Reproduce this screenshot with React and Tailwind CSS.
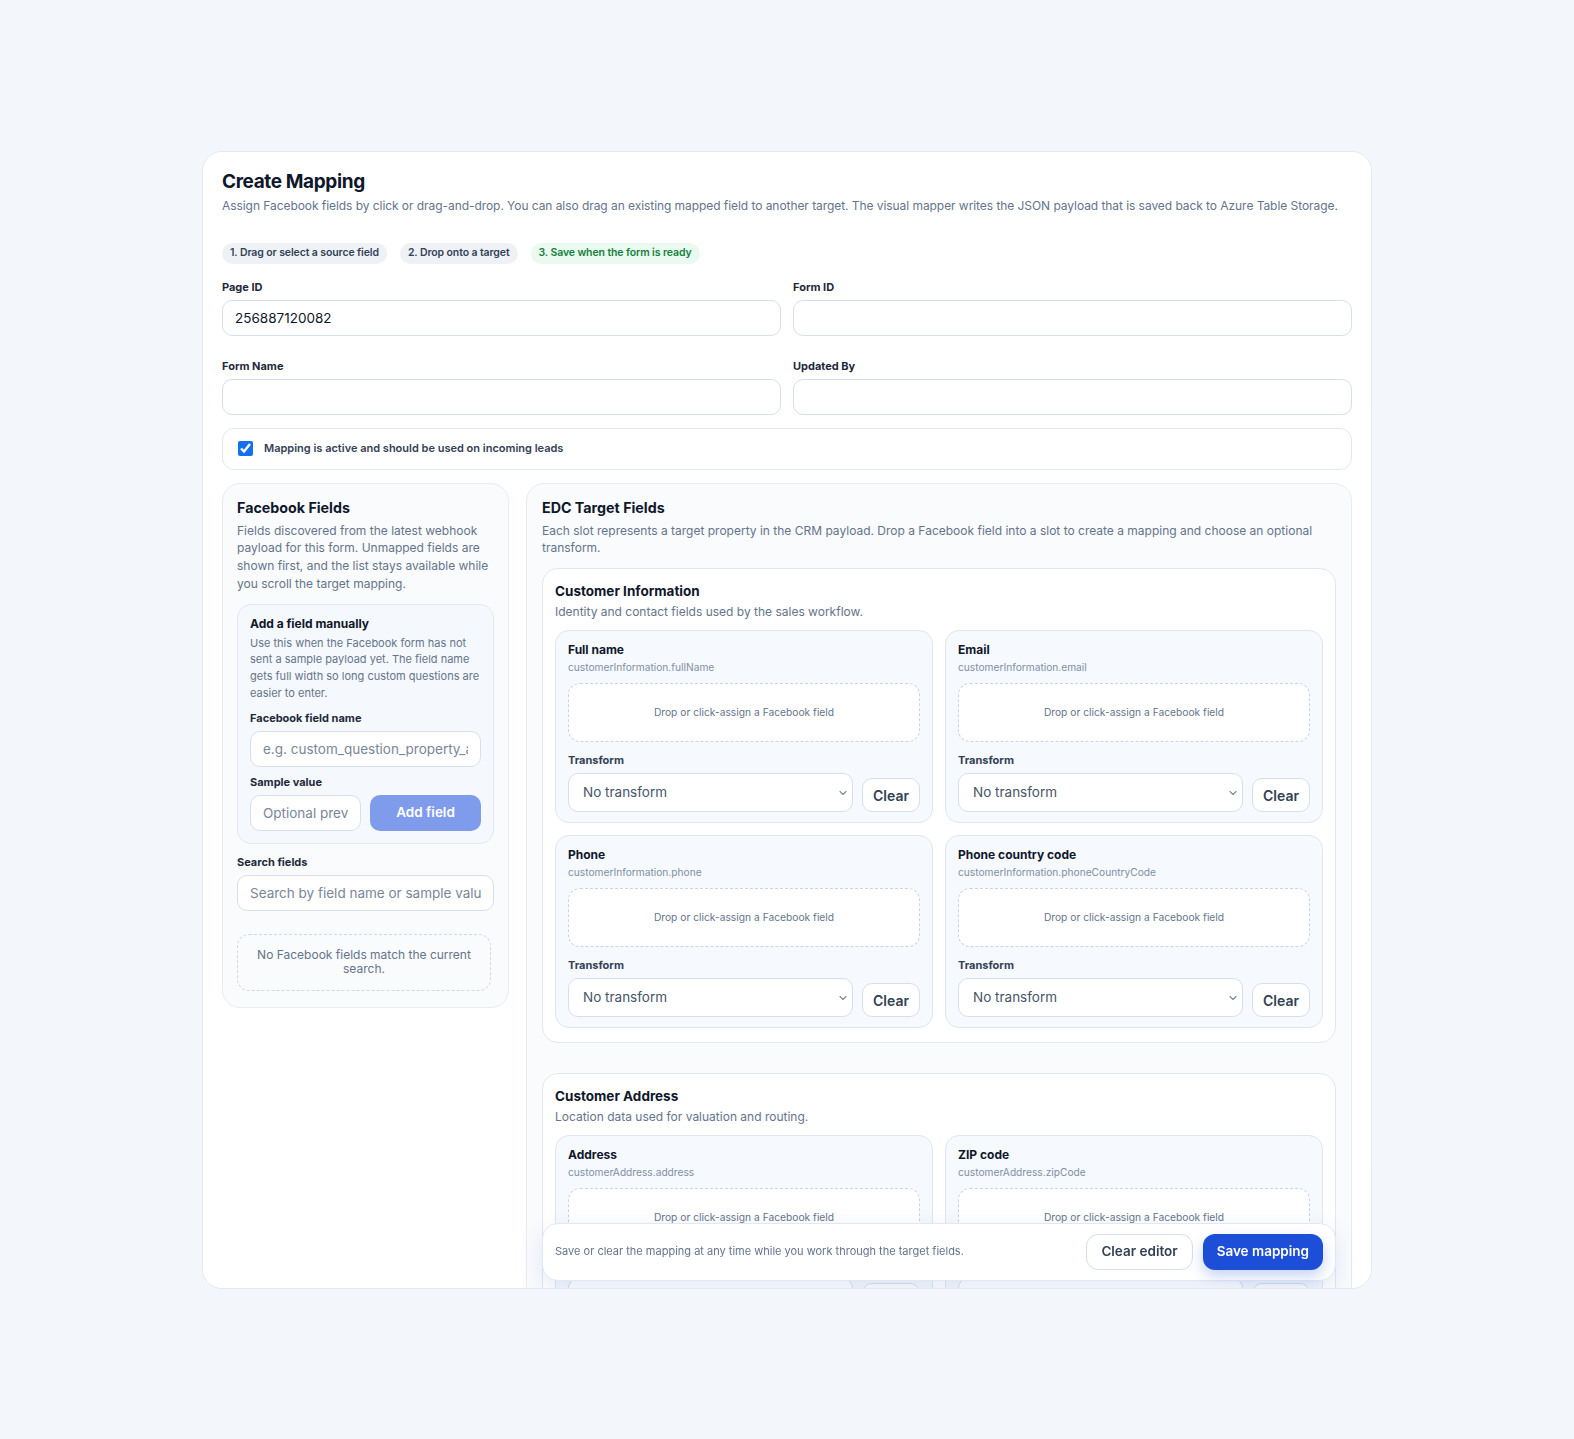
import React from "react";

const transforms = ["No transform", "Trim whitespace", "Uppercase", "Lowercase", "Phone (E.164)"];

function Chevron() {
  return (
    <svg
      className="pointer-events-none absolute right-[6px] top-1/2 -translate-y-1/2"
      width="8"
      height="5"
      viewBox="0 0 8 5"
      fill="none"
    >
      <path d="M1 1l3 3 3-3" stroke="#7b8799" strokeWidth="1.1" strokeLinecap="round" strokeLinejoin="round" />
    </svg>
  );
}

function SlotCard({ label, path }) {
  return (
    <div className="rounded-[14px] border border-[#dfe6f1] bg-[#f6f9fd] px-3 pt-[13px] pb-[10px]">
      <div className="text-[12px] font-bold leading-none text-[#0f172a]">{label}</div>
      <div className="mt-[3px] text-[10.2px] leading-4 text-[#8090a6]">{path}</div>
      <div className="mt-2 flex h-[59px] items-center justify-center rounded-[12px] border border-dashed border-[#c9d4e4] bg-white text-[10.25px] text-[#66758c]">
        Drop or click-assign a Facebook field
      </div>
      <div className="mt-[10px] text-[11px] font-bold leading-4 text-[#334155]">Transform</div>
      <div className="mt-[5px] flex items-end gap-[9px]">
        <div className="relative min-w-0 flex-1">
          <select className="h-[39px] w-full appearance-none rounded-[10px] border border-[#d6dfeb] bg-white pl-3.5 pr-5 text-[13.5px] text-[#475569] outline-none">
            {transforms.map((t) => (
              <option key={t}>{t}</option>
            ))}
          </select>
          <Chevron />
        </div>
        <button className="h-[34px] rounded-[10px] border border-[#d6dfeb] bg-white px-2.5 text-[14px] font-semibold text-[#334155]">
          Clear
        </button>
      </div>
    </div>
  );
}

function Section({ title, description, slots }) {
  return (
    <div className="rounded-[16px] border border-[#e2e8f1] bg-white px-3 pt-[14px] pb-[14px]">
      <div className="text-[13.5px] font-bold leading-[17px] text-[#0f172a]">{title}</div>
      <div className="mt-[3px] text-[12px] leading-[18px] text-[#64748b]">{description}</div>
      <div className="mt-[9px] grid grid-cols-2 gap-3">
        {slots.map((s) => (
          <SlotCard key={s.path} label={s.label} path={s.path} />
        ))}
      </div>
    </div>
  );
}

const sections = [
  {
    title: "Customer Information",
    description: "Identity and contact fields used by the sales workflow.",
    slots: [
      { label: "Full name", path: "customerInformation.fullName" },
      { label: "Email", path: "customerInformation.email" },
      { label: "Phone", path: "customerInformation.phone" },
      { label: "Phone country code", path: "customerInformation.phoneCountryCode" },
    ],
  },
  {
    title: "Customer Address",
    description: "Location data used for valuation and routing.",
    slots: [
      { label: "Address", path: "customerAddress.address" },
      { label: "ZIP code", path: "customerAddress.zipCode" },
      { label: "City", path: "customerAddress.city" },
      { label: "Country", path: "customerAddress.country" },
    ],
  },
  {
    title: "Vehicle Details",
    description: "Vehicle data passed on to the valuation service.",
    slots: [
      { label: "Make", path: "vehicle.make" },
      { label: "Model", path: "vehicle.model" },
      { label: "Year", path: "vehicle.year" },
      { label: "Mileage", path: "vehicle.mileage" },
    ],
  },
];

const inputCls =
  "h-9 w-full rounded-[10px] border border-[#d6dfeb] bg-white px-3 text-[13.5px] text-[#0f172a] placeholder:text-[#7a8699] outline-none";

function Field({ label, value }) {
  return (
    <label className="flex flex-col gap-[5px]">
      <span className="text-[11px] font-bold leading-4 text-[#1e293b]">{label}</span>
      <input className={inputCls} defaultValue={value} />
    </label>
  );
}

function Pill({ children, green }) {
  return (
    <span
      className={
        green
          ? "flex h-[21px] items-center rounded-full bg-[#eafaf0] px-2 text-[10.5px] font-semibold tracking-[-0.01em] text-[#15803d]"
          : "flex h-[21px] items-center rounded-full bg-[#eef2f7] px-2 text-[10.5px] font-semibold tracking-[-0.01em] text-[#334155]"
      }
    >
      {children}
    </span>
  );
}

export default function App() {
  return (
    <div className="flex min-h-screen items-center justify-center bg-[#f3f6fb] font-['Inter','Noto_Sans',sans-serif]">
      <div className="h-[1138px] w-[1170px] overflow-y-auto rounded-[20px] border border-[#e3e9f2] bg-white px-[19px] pt-[18px] [scrollbar-width:none]">
        <h1 className="text-[19px] font-bold leading-6 tracking-[-0.02em] text-[#0f172a]">Create Mapping</h1>
        <p className="mt-[2px] text-[12px] leading-5 tracking-[-0.005em] text-[#64748b]">
          Assign Facebook fields by click or drag-and-drop. You can also drag an existing mapped field to another
          target. The visual mapper writes the JSON payload that is saved back to Azure Table Storage.
        </p>

        <div className="mt-[27px] flex gap-[13px]">
          <Pill>1. Drag or select a source field</Pill>
          <Pill>2. Drop onto a target</Pill>
          <Pill green>3. Save when the form is ready</Pill>
        </div>

        <div className="mt-[15px] grid grid-cols-2 gap-x-3 gap-y-[22px]">
          <Field label="Page ID" value="256887120082" />
          <Field label="Form ID" value="" />
          <Field label="Form Name" value="" />
          <Field label="Updated By" value="" />
        </div>

        <label className="mt-[13px] flex h-[42px] items-center gap-[11px] rounded-[12px] border border-[#e2e8f1] px-[15px]">
          <input type="checkbox" defaultChecked className="h-[15px] w-[15px] accent-[#1570ef]" />
          <span className="text-[11px] font-semibold text-[#334155]">
            Mapping is active and should be used on incoming leads
          </span>
        </label>

        <div className="mt-[13px] grid grid-cols-[287px_minmax(0,1fr)] items-start gap-[17px]">
          {/* Source fields column */}
          <div className="rounded-[18px] border border-[#e6ecf4] bg-[#fafbfd] px-[14px] pt-[14px] pb-[16px]">
            <h2 className="text-[14.25px] font-bold leading-[19px] text-[#0f172a]">Facebook Fields</h2>
            <p className="mt-[5px] text-[12px] leading-[17.8px] text-[#64748b]">
              Fields discovered from the latest webhook payload for this form. Unmapped fields are shown first, and
              the list stays available while you scroll the target mapping.
            </p>

            <div className="mt-[11px] rounded-[14px] border border-[#e2e8f1] bg-[#f5f8fc] px-3 pt-[11px] pb-3">
              <div className="text-[12px] font-bold leading-4 text-[#0f172a]">Add a field manually</div>
              <p className="mt-[3px] text-[11px] leading-[16.7px] text-[#64748b]">
                Use this when the Facebook form has not sent a sample payload yet. The field name gets full width so
                long custom questions are easier to enter.
              </p>
              <div className="mt-[8px] text-[11px] font-bold leading-4 text-[#1e293b]">Facebook field name</div>
              <input className={inputCls + " mt-[5px]"} placeholder="e.g. custom_question_property_address" />
              <div className="mt-[7px] text-[11px] font-bold leading-4 text-[#1e293b]">Sample value</div>
              <div className="mt-[5px] grid grid-cols-2 gap-[9px]">
                <input className={inputCls} placeholder="Optional preview value" />
                <button className="h-9 rounded-[10px] bg-[#7f9cec] text-[13.5px] font-semibold text-white">
                  Add field
                </button>
              </div>
            </div>

            <div className="mt-[10px] text-[11px] font-bold leading-4 text-[#1e293b]">Search fields</div>
            <input className={inputCls + " mt-[5px]"} placeholder="Search by field name or sample value" />

            <div className="mt-[23px] mr-[3px] flex h-[57px] items-center justify-center rounded-[12px] border border-dashed border-[#cfd8e5] px-4 text-center text-[12px] leading-[14px] text-[#64748b]">
              No Facebook fields match the current search.
            </div>
          </div>

          {/* Target fields column */}
          <div className="rounded-[18px] border border-[#e6ecf4] bg-[#fafbfd] px-[15px] pt-[14px]">
            <h2 className="text-[14.25px] font-bold leading-[19px] text-[#0f172a]">EDC Target Fields</h2>
            <p className="mt-[5px] text-[12px] leading-[17.8px] text-[#64748b]">
              Each slot represents a target property in the CRM payload. Drop a Facebook field into a slot to create a
              mapping and choose an optional transform.
            </p>

            <div className="mt-[11px] flex flex-col gap-[30px]">
              {sections.map((s) => (
                <Section key={s.title} title={s.title} description={s.description} slots={s.slots} />
              ))}
            </div>

            <div className="sticky bottom-[6px] z-10 mt-4 mb-2 flex h-[58px] items-center justify-between rounded-[16px] border border-[#e2e8f1] bg-white px-3 shadow-[0_8px_24px_rgba(37,72,170,0.12)]">
              <span className="text-[11px] text-[#64748b]">
                Save or clear the mapping at any time while you work through the target fields.
              </span>
              <div className="flex gap-[10px]">
                <button className="h-9 rounded-[12px] border border-[#d6dfeb] bg-white px-3.5 text-[13.5px] font-semibold text-[#334155]">
                  Clear editor
                </button>
                <button className="h-9 rounded-[12px] bg-[#1d4ed8] px-3.5 text-[13.5px] font-semibold text-white shadow-[0_6px_14px_rgba(29,78,216,0.25)]">
                  Save mapping
                </button>
              </div>
            </div>
          </div>
        </div>
      </div>
    </div>
  );
}
